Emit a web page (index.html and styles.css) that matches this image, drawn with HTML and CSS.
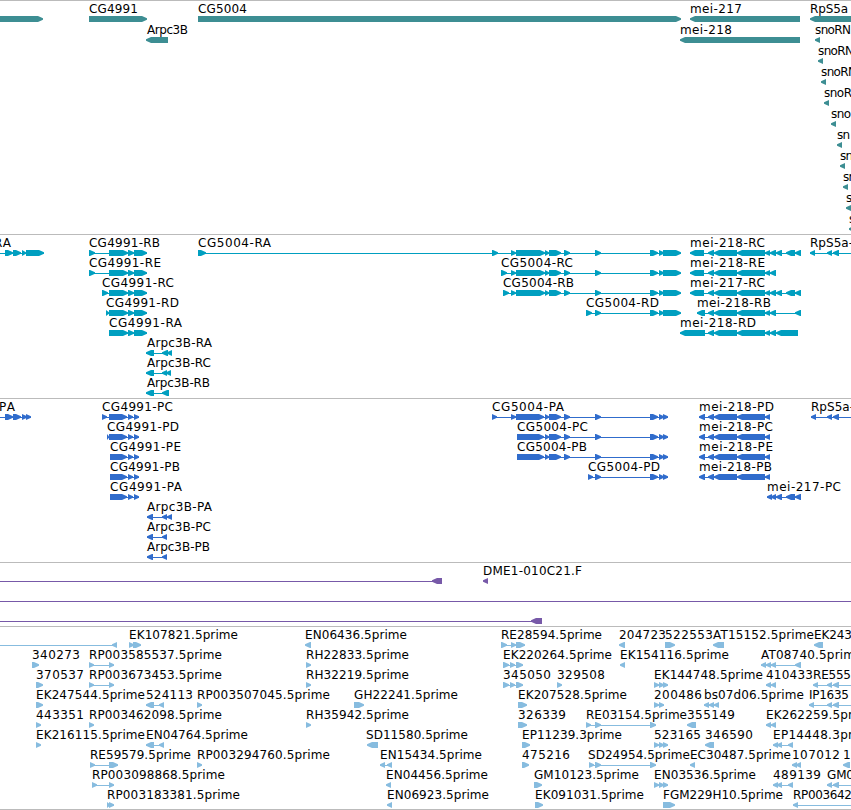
FILE: index.html
```html
<!DOCTYPE html>
<html lang="en">
<head>
<meta charset="utf-8">
<title>Genome browser</title>
<link rel="stylesheet" href="styles.css">
</head>
<body>
<main class="browser">
<svg class="track gene" id="gene"></svg>
<svg class="track transcript" id="transcript"></svg>
<svg class="track protein" id="protein"></svg>
<svg class="track bac" id="bac"></svg>
<svg class="track est" id="est"></svg>
</main>
<script src="tracks.js"></script>
</body>
</html>
```
FILE: styles.css
```css
body {
  margin: 0;
  background: #fff;
}

.browser {
  display: flex;
  flex-direction: column;
  width: 851px;
  height: 809px;
  border-bottom: 1px solid #bbb;
  overflow: hidden;
}

.track {
  display: block;
  box-sizing: border-box;
  flex: none;
  width: 851px;
  border-top: 1px solid #bbb;
  overflow: hidden;
}

.gene { height: 234px; color: #3d8e93; }
.transcript { height: 164px; color: #009fc0; }
.protein { height: 164px; color: #306ccc; }
.bac { height: 64px; color: #7759a8; }
.est { height: 183px; color: #87bcdf; }

.shape {
  fill: currentColor;
}

.label {
  fill: #000;
  font: 12px "DejaVu Sans", sans-serif;
}
```
FILE: tracks.js
```javascript
// Each feature: row | strand | label | label start | label end | exons | optional line start-end
const tracks = {
  gene: { pitch: 21, data: `
0|+||||0-43
0|+|CG4991|89|138|89-147
0|+|CG5004|198|247|198-681
0|-|mei-217|690|742|690-800
0|-|RpS5a|810|848|810-860
1|-|Arpc3B|147|188|146-168
1|-|mei-218|680|732|680-800
1|-|snoRN|815|851|815-820
2|-|snoRN|818|854|818-823
3|-|snoRN|821|857|821-826
4|-|snoR|824|852|824-829
5|-|sno|831|851|831-836
6|-|sn|837|850|837-842
7|-|sn|840|853|840-845
8|-|sn|843|856|843-848
9|-|s|846||846-852
10|-|s|849||849-854` },
  transcript: { pitch: 20, data: `
0|+|RA|-6|11|5-13,13-21,22-26,26-44|0-44
0|+|CG4991-RB|89|160|89-95,109-128,128-134,134-147
1|+|CG4991-RE|89|161|89-95,109-128,128-134,134-147
2|+|CG4991-RC|102|174|102-108,109-128,128-134,134-147
3|+|CG4991-RD|106|179|106-109,109-128,128-134,134-147
4|+|CG4991-RA|109|182|109-128,128-134,134-147
5|-|Arpc3B-RA|147|212|146-154,162-168,167-172
6|-|Arpc3B-RC|147|211|146-154,162-167,166-171
7|-|Arpc3B-RB|147|210|146-154,162-169
0|+|CG5004-RA|198|271|198-206,492-498,511-516,516-545,545-549,549-561,564-570,595-601,650-658,659-664,663-681
1|+|CG5004-RC|501|573|501-507,511-516,516-545,545-549,549-561,564-570,595-601,650-658,659-664,663-681
2|+|CG5004-RB|503|574|503-509,511-516,516-545,545-549,549-561,564-570,595-601,650-658,659-664,663-681
3|+|CG5004-RD|586|659|586-592,595-601,650-658,659-664,663-681
0|-|mei-218-RC|690|765|690-704,708-714,714-737,737-765,765-770,770-776,776-782,786-795,795-801
1|-|mei-218-RE|690|765|690-704,708-714,714-737,737-765,765-770,770-776
2|-|mei-217-RC|690|765|690-704,708-714,714-737,737-765,765-770,770-776,776-782,786-795,795-801
3|-|mei-218-RB|697|771|697-705,708-714,714-737,737-765,765-770,770-776,795-801
4|-|mei-218-RD|680|756|680-705,708-714,714-737,737-765,765-770,770-776,776-798
0|-|RpS5a-|810|853|810-815,827-832,833-839|810-851` },
  protein: { pitch: 20, data: `
0|+|PA|-1|15|5-13,13-21,22-27,26-31|0-31
0|+|CG4991-PC|102|173|102-107,109-127,128-133,134-139
1|+|CG4991-PD|107|179|107-109,109-127,128-133,134-139
2|+|CG4991-PE|110|181|110-127,128-133,134-139
3|+|CG4991-PB|110|180|110-127,128-133,134-139
4|+|CG4991-PA|110|182|110-127,128-133,134-139
5|-|Arpc3B-PA|147|212|147-153,162-167,167-172
6|-|Arpc3B-PC|147|211|147-153,162-167
7|-|Arpc3B-PB|147|210|147-153,162-167
0|+|CG5004-PA|492|564|492-497,511-516,516-544,545-549,549-561,564-570,595-601,650-658,659-664,663-668
1|+|CG5004-PC|517|588|517-544,545-549,549-561,564-570,595-601,650-658,659-664,663-668
2|+|CG5004-PB|517|587|517-544,545-549,549-561,564-570,595-601,650-658,659-664,663-668
3|+|CG5004-PD|588|660|588-593,595-601,650-658,659-664,663-668
0|-|mei-218-PD|699|774|699-705,708-714,714-737,737-765,765-770
1|-|mei-218-PC|699|773|699-705,708-714,714-737,737-765,765-770
2|-|mei-218-PE|699|773|699-705,708-714,714-737,737-765,765-770
3|-|mei-218-PB|699|772|699-705,708-714,714-737,737-765,765-770
4|-|mei-217-PC|767|841|767-772,771-776,776-782,786-795,795-801
0|-|RpS5a-|811|854|811-816,827-832,833-839|811-851` },
  bac: { pitch: 20, data: `
0|-||||432-442|0-442
0|-|DME1-010C21.F|483|582|483-488
1|-|||||0-851
2|-||||531-542|0-542` },
  est: { pitch: 20, data: `
0|-||||112-117|0-117
0|+|EK107821.5prime|129|238|129-134,133-141
0|-|EN06436.5prime|305|407|305-311
0|+|RE28594.5prime|501|602|501-507,511-516,516-525
0|-|204723|619|666|619-625
0|+|522553|665|713|665-675
0|-|AT15152.5prime|713|814|713-724
0|-|EK243|814|852|814-823
1|+|340273|32|80|32-39
1|+|RP003585537.5prime|89|222|89-94,109-114
1|+|RH22833.5prime|306|409|306-311
1|+|EK220264.5prime|503|612|503-509,510-515,516-523
1|-|EK154116.5prime|620|729|620-625
1|-|AT08740.5prim|761|855|761-766,766-771,771-776,795-801
2|+|370537|36|84|36-43
2|+|RP003673453.5prime|89|222|89-94,109-114
2|+|RH32219.5prime|306|409|306-311
2|+|345050|503|551|503-509,510-515,516-523
2|+|329508|557|605|557-562
2|+|EK144748.5prime|654|763|654-659,659-664,663-668
2|-|410433|766|813|766-771,771-776
2|-|RE555|813|851|813-818,827-832,833-839|813-851
3|+|EK247544.5prime|36|145|36-43
3|-|524113|146|193|146-154,159-164
3|+|RP003507045.5prime|197|330|197-202
3|+|GH22241.5prime|354|458|354-364
3|+|EK207528.5prime|518|627|518-527
3|+|200486|654|702|654-659,659-664
3|-|bs07d06.5prime|704|804|704-709,709-714,714-719
3|-|IP1635|809|849|809-814,827-832,833-839|809-851
4|+|443351|36|84|36-41
4|+|RP003462098.5prime|89|222|89-94
4|+|RH35942.5prime|306|409|306-311
4|+|326339|518|566|518-527
4|+|RE03154.5prime|586|687|586-591,595-601,650-656
4|-|355149|687|735|687-696
4|-|EK262259.5pr|766|853|766-771,771-776
5|+|EK216115.5prime|36|145|36-41
5|-|EN04764.5prime|146|248|146-154,159-164
5|-|SD11580.5prime|366|468|367-378
5|+|EP11239.3prime|522|622|522-530
5|+|523165|654|701|654-659,659-664,663-668
5|-|346590|705|753|705-714
5|-|EP14448.3pr|773|853|773-778,777-782,788-793
6|+|RE59579.5prime|90|191|90-95,109-118
6|+|RP003294760.5prime|197|330|197-202
6|-|EN15434.5prime|380|482|380-385,387-392
6|+|475216|522|570|522-529
6|+|SD24954.5prime|588|690|589-594,595-601,650-656
6|-|EC30487.5prime|690|791|690-695
6|-|107012|792|840|792-797,796-801
6|-|1|843||843-850
7|+|RP003098868.5prime|92|225|92-97,109-114
7|-|EN04456.5prime|386|488|386-391
7|+|GM10123.5prime|534|639|534-542
7|+|EN03536.5prime|654|756|654-659,659-664,663-668
7|-|489139|773|821|773-778,777-782,788-793
7|-|GM0|827|854|827-832,833-839|827-851
8|+|RP003183381.5prime|107|240|107-110,109-114
8|-|EN06923.5prime|387|489|387-392
8|+|EK091031.5prime|535|644|535-543
8|+|FGM229H10.5prime|663|783|663-675
8|-|RP003642|793|852|793-798|793-851` }
};

// Bars are 6px high and end in an arrowhead of up to 5px.
function arrow(start, end, strand, top) {
  const head = Math.min(5, end - start);
  const points = strand === "+"
    ? [[start, 0], [end - head, 0], [end, 2.2], [end, 3.8], [end - head, 6], [start, 6]]
    : [[end, 0], [start + head, 0], [start, 2.2], [start, 3.8], [start + head, 6], [end, 6]];
  return `<polygon class="shape" points="${points.map(([x, y]) => `${x},${top + y}`).join(" ")}"/>`;
}

for (const [id, { pitch, data }] of Object.entries(tracks)) {
  let shapes = "";
  let labels = "";
  for (const line of data.trim().split("\n")) {
    const [row, strand, name, x, labelEnd, exonList, span] = line.split("|");
    const top = row * pitch + 15;
    const exons = exonList ? exonList.split(",").map(e => e.split("-").map(Number)) : [];
    const [from, to] = span ? span.split("-").map(Number) : [exons[0][0], exons.at(-1)[1]];
    if (span || exons.length > 1) {
      shapes += `<rect class="shape" x="${from}" y="${top + 3}" width="${to - from}" height="1"/>`;
    }
    shapes += exons.map(([s, e]) => arrow(s, e, strand, top)).join("");
    if (name) {
      const fit = labelEnd ? ` textLength="${labelEnd - x}"` : "";
      labels += `<text class="label" x="${x}" y="${top - 3}"${fit}>${name}</text>`;
    }
  }
  document.getElementById(id).innerHTML = shapes + labels;
}
```
